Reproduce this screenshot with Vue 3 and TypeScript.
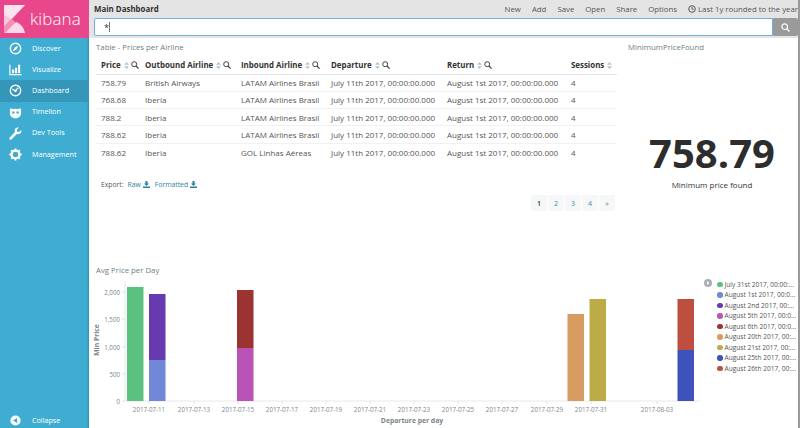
<script setup lang="ts">
interface Row { price: string; outbound: string; inbound: string }
const navItems = [
  { label: 'Discover', icon: 'compass' },
  { label: 'Visualize', icon: 'chart' },
  { label: 'Dashboard', icon: 'gauge', active: true },
  { label: 'Timelion', icon: 'mask' },
  { label: 'Dev Tools', icon: 'wrench' },
  { label: 'Management', icon: 'gear' },
]
const menu = ['New', 'Add', 'Save', 'Open', 'Share', 'Options']
const columns = [
  { label: 'Price', filter: true },
  { label: 'Outbound Airline', filter: true },
  { label: 'Inbound Airline', filter: true },
  { label: 'Departure', filter: true },
  { label: 'Return', filter: true },
  { label: 'Sessions', filter: false },
]
const rows: Row[] = [
  { price: '758.79', outbound: 'British Airways', inbound: 'LATAM Airlines Brasil' },
  { price: '768.68', outbound: 'Iberia', inbound: 'LATAM Airlines Brasil' },
  { price: '788.2', outbound: 'Iberia', inbound: 'LATAM Airlines Brasil' },
  { price: '788.62', outbound: 'Iberia', inbound: 'LATAM Airlines Brasil' },
  { price: '788.62', outbound: 'Iberia', inbound: 'GOL Linhas Aéreas' },
]
const pages = ['1', '2', '3', '4', '»']
const bars = [
  { x: 127, y: 287, h: 114, c: '#5ac17f' },
  { x: 149, y: 294, h: 66, c: '#673ab0' },
  { x: 149, y: 360, h: 41, c: '#7088d5' },
  { x: 237, y: 290, h: 58, c: '#9c3333' },
  { x: 237, y: 348, h: 53, c: '#b953b8' },
  { x: 567.5, y: 314, h: 87, c: '#d89c62' },
  { x: 589.5, y: 299, h: 102, c: '#bcab46' },
  { x: 677.5, y: 299, h: 51, c: '#bc4f40' },
  { x: 677.5, y: 350, h: 51, c: '#3f51bb' },
]
const yTicks = [
  { y: 292, t: '2,000' },
  { y: 319, t: '1,500' },
  { y: 347, t: '1,000' },
  { y: 374, t: '500' },
  { y: 401, t: '0' },
]
const xTicks = [
  { x: 149, t: '2017-07-11' },
  { x: 194, t: '2017-07-13' },
  { x: 238, t: '2017-07-15' },
  { x: 282, t: '2017-07-17' },
  { x: 326, t: '2017-07-19' },
  { x: 370, t: '2017-07-21' },
  { x: 414, t: '2017-07-23' },
  { x: 458, t: '2017-07-25' },
  { x: 502, t: '2017-07-27' },
  { x: 547, t: '2017-07-29' },
  { x: 591, t: '2017-07-31' },
  { x: 657, t: '2017-08-03' },
]
const legend = [
  { t: 'July 31st 2017, 00:00:...', c: '#5ac17f' },
  { t: 'August 1st 2017, 00:0...', c: '#7088d5' },
  { t: 'August 2nd 2017, 00:...', c: '#673ab0' },
  { t: 'August 5th 2017, 00:0...', c: '#b953b8' },
  { t: 'August 6th 2017, 00:0...', c: '#9c3333' },
  { t: 'August 20th 2017, 00:...', c: '#d89c62' },
  { t: 'August 21st 2017, 00:...', c: '#bcab46' },
  { t: 'August 25th 2017, 00:...', c: '#3f51bb' },
  { t: 'August 26th 2017, 00:...', c: '#bc4f40' },
]
</script>

<template>
  <div class="app">
    <aside class="sidebar">
      <div class="brand">
        <svg class="logo" width="21" height="28" viewBox="0 0 21 28">
          <path d="M0 0H21L0 22Z" fill="#f9c6dc" />
          <path d="M0 22L8 14 21 28H0Z" fill="#f38fbb" />
          <path d="M1 28L12 17C17 19 20 23 21 28Z" fill="#fbd9e8" />
          <path d="M0 0H21L8 14 0 10Z" fill="#fff" opacity=".5" />
        </svg>
        <span class="brand-name">kibana</span>
      </div>
      <nav class="nav">
        <a v-for="item in navItems" :key="item.label" class="nav-item" :class="{ active: item.active }">
          <svg class="nav-icon" width="13" height="13" viewBox="0 0 14 14">
            <template v-if="item.icon === 'compass'">
              <circle cx="7" cy="7" r="5.6" fill="none" stroke="#fff" stroke-width="1.5" />
              <path d="M10 4 8 8 4 10 6 6Z" fill="#fff" />
            </template>
            <template v-else-if="item.icon === 'chart'">
              <path d="M1 2V12.5H13.5" fill="none" stroke="#fff" stroke-width="1.3" />
              <path d="M3.3 7H5.5V11H3.3ZM6.5 5H8.7V11H6.5ZM9.8 2H12V11H9.8Z" fill="#fff" />
            </template>
            <template v-else-if="item.icon === 'gauge'">
              <circle cx="7" cy="7" r="5.6" fill="none" stroke="#fff" stroke-width="1.5" />
              <path d="M3.5 5.5 7 7.2 10 4" fill="none" stroke="#fff" stroke-width="1.3" />
              <circle cx="7" cy="7.5" r="1.3" fill="#fff" />
            </template>
            <template v-else-if="item.icon === 'mask'">
              <path d="M1 2.5C3 3.5 5 3.5 7 3 9 3.5 11 3.5 13 2.5V8C13 11 10 13 7 13.5 4 13 1 11 1 8Z" fill="#fff" />
              <circle cx="4.7" cy="7" r="1.3" fill="#3fadd1" />
              <circle cx="9.3" cy="7" r="1.3" fill="#3fadd1" />
            </template>
            <template v-else-if="item.icon === 'wrench'">
              <path d="M13.2 3.2 10.8 5.4 8.8 5 8.4 3 10.6.8C8.6 0 6.6 1.2 6.2 3 6 4 6.2 4.8 6.5 5.5L.8 11.2C0 12 .4 13 1 13.4 1.6 13.8 2.4 13.6 2.8 13.2L8.5 7.5C9.4 7.9 10.4 7.9 11.4 7.4 13 6.6 13.8 4.8 13.2 3.2Z" fill="#fff" />
            </template>
            <template v-else>
              <circle cx="7" cy="7" r="4.2" fill="none" stroke="#fff" stroke-width="2.6" />
              <path d="M6 .5H8V3H6ZM6 11H8V13.5H6ZM.5 6H3V8H.5ZM11 6H13.5V8H11ZM1.7 3.1 3.1 1.7 4.8 3.4 3.4 4.8ZM9.2 10.6 10.6 9.2 12.3 10.9 10.9 12.3ZM1.7 10.9 3.4 9.2 4.8 10.6 3.1 12.3ZM9.2 3.4 10.9 1.7 12.3 3.1 10.6 4.8Z" fill="#fff" />
            </template>
          </svg>
          <span class="nav-label">{{ item.label }}</span>
        </a>
      </nav>
      <a class="nav-item collapse">
        <svg class="nav-icon" width="13" height="13" viewBox="0 0 14 14">
          <circle cx="7" cy="7" r="5.5" fill="#fff" />
          <path d="M8.8 4V10L4.4 7Z" fill="#3fadd1" />
        </svg>
        <span class="nav-label">Collapse</span>
      </a>
    </aside>

    <main class="main">
      <header class="topbar">
        <div class="topline">
          <strong class="title">Main Dashboard</strong>
          <div class="menu">
            <span v-for="m in menu" :key="m">{{ m }}</span>
            <span class="time">
              <svg width="8" height="8" viewBox="0 0 8 8">
                <circle cx="4" cy="4" r="3.3" fill="none" stroke="#444" stroke-width=".9" />
                <path d="M4 2V4.2H5.6" fill="none" stroke="#444" stroke-width=".8" />
              </svg>
              Last 1y rounded to the year
            </span>
          </div>
        </div>
        <div class="query">
          <div class="query-input"><span class="star">*</span><i class="caret"></i></div>
          <button class="query-btn" type="button">
            <svg width="9" height="9" viewBox="0 0 9 9">
              <circle cx="3.7" cy="3.7" r="2.8" fill="none" stroke="#fff" stroke-width="1.2" />
              <path d="M5.8 5.8 8.4 8.4" stroke="#fff" stroke-width="1.4" />
            </svg>
          </button>
        </div>
      </header>

      <section class="upper">
        <div class="table-panel">
          <h3 class="panel-title">Table - Prices per Airline</h3>
          <table class="table">
            <thead>
              <tr>
                <th v-for="col in columns" :key="col.label">
                  <span class="th-in">
                    {{ col.label }}
                    <svg width="5" height="7" viewBox="0 0 5 7" class="sort"><path d="M2.5 0 5 2.8H0ZM2.5 7 0 4.2H5Z" fill="#b9c4c8" /></svg>
                    <svg v-if="col.filter" width="8" height="8" viewBox="0 0 8 8" class="zoom">
                      <circle cx="3.2" cy="3.2" r="2.5" fill="none" stroke="#444" stroke-width="1" />
                      <path d="M5 5 7.6 7.6" stroke="#444" stroke-width="1.2" />
                    </svg>
                  </span>
                </th>
              </tr>
            </thead>
            <tbody>
              <tr v-for="(r, i) in rows" :key="i">
                <td>{{ r.price }}</td>
                <td>{{ r.outbound }}</td>
                <td>{{ r.inbound }}</td>
                <td>July 11th 2017, 00:00:00.000</td>
                <td>August 1st 2017, 00:00:00.000</td>
                <td>4</td>
              </tr>
            </tbody>
          </table>
          <div class="export">
            <span>Export:</span>
            <a>Raw <svg width="7" height="7" viewBox="0 0 7 7"><path d="M2.5 0H4.5V2.5H6L3.5 5 1 2.5H2.5ZM0 5.5H7V7H0Z" fill="#2f7f9f" /></svg></a>
            <a>Formatted <svg width="7" height="7" viewBox="0 0 7 7"><path d="M2.5 0H4.5V2.5H6L3.5 5 1 2.5H2.5ZM0 5.5H7V7H0Z" fill="#2f7f9f" /></svg></a>
          </div>
          <div class="pager">
            <span v-for="(p, i) in pages" :key="p" class="page" :class="{ current: i === 0 }">{{ p }}</span>
          </div>
        </div>
        <div class="metric-panel">
          <h3 class="panel-title">MinimumPriceFound</h3>
          <div class="metric">
            <div class="metric-value">758.79</div>
            <div class="metric-label">Minimum price found</div>
          </div>
        </div>
      </section>

      <section class="lower">
        <div class="chart-wrap">
          <h3 class="panel-title chart-title">Avg Price per Day</h3>
          <svg class="chart" width="617" height="163" viewBox="89 265 617 163">
            <path d="M125 281V401H700" fill="none" stroke="#e6e9ea" stroke-width="1" />
            <g v-for="t in yTicks" :key="t.t">
              <path :d="`M122 ${t.y}H125`" stroke="#dfe3e4" />
              <text class="tick" x="120" :y="t.y + 3" text-anchor="end">{{ t.t }}</text>
            </g>
            <g v-for="t in xTicks" :key="t.t">
              <path :d="`M${t.x} 401V404`" stroke="#dfe3e4" />
              <text class="tick" :x="t.x" y="412" text-anchor="middle">{{ t.t }}</text>
            </g>
            <rect v-for="(b, i) in bars" :key="i" :x="b.x" :y="b.y" width="16.5" :height="b.h" :fill="b.c" />
            <text class="axis-title" transform="translate(99 340) rotate(-90)" text-anchor="middle">Min Price</text>
            <text class="axis-title" x="412" y="422.5" text-anchor="middle">Departure per day</text>
          </svg>
        </div>
        <div class="legend">
          <div class="legend-toggle">
            <svg width="8" height="8" viewBox="0 0 8 8">
              <circle cx="4" cy="4" r="4" fill="#a9b0b3" />
              <path d="M3 2 5.4 4 3 6Z" fill="#fff" />
            </svg>
          </div>
          <ul class="legend-list">
            <li v-for="l in legend" :key="l.t">
              <i class="dot" :style="{ background: l.c }"></i>
              <span>{{ l.t }}</span>
            </li>
          </ul>
        </div>
      </section>
    </main>
  </div>
</template>

<style>
html, body { margin: 0; padding: 0; background: #fff; overflow: hidden; }
</style>

<style scoped>
.app {
  display: flex;
  width: 800px;
  height: 428px;
  overflow: hidden;
  font-family: "Open Sans", "Noto Sans", sans-serif;
  color: #3f3f3f;
  font-size: 8.5px;
}
.sidebar {
  width: 89px;
  flex: none;
  display: flex;
  flex-direction: column;
  background: #3fadd1;
  box-shadow: inset -2px 0 2px -1px #2f8fb0;
}
.brand {
  height: 38px;
  flex: none;
  display: flex;
  align-items: center;
  gap: 5px;
  padding-left: 4px;
  background: #e8488b;
  box-sizing: border-box;
}
.logo { flex: none; }
.brand-name {
  color: #fff;
  font-size: 17px;
  font-weight: 300;
  letter-spacing: .1px;
  margin-top: -1px;
}
.nav { flex: 1; display: flex; flex-direction: column; }
.nav-item {
  height: 21.2px;
  display: flex;
  align-items: center;
  padding-left: 9px;
  gap: 10px;
  color: #fff;
  font-size: 7.2px;
  font-weight: 400;
  flex: none;
}
.nav-label { margin-bottom: 2px; }
.nav-item.active { background: #3497ba; }
.nav-icon { flex: none; }
.collapse { height: 15px; margin-bottom: 0; }

.main {
  flex: 1;
  min-width: 0;
  display: flex;
  flex-direction: column;
  border-right: 2px solid #9a9a9a;
}
.topbar {
  height: 38px;
  flex: none;
  background: #e4e4e4;
  padding: 1px 0 0 5px;
  box-sizing: border-box;
}
.topline {
  height: 16px;
  display: flex;
  align-items: center;
  justify-content: space-between;
}
.title { font-size: 7.9px; font-weight: 700; color: #333; }
.menu { display: flex; gap: 11px; font-size: 7.8px; color: #555; white-space: nowrap; }
.time { display: flex; align-items: center; gap: 2px; }
.query { display: flex; height: 18px; margin-top: 1px; }
.query-input {
  flex: 1;
  background: #fff;
  border: 1px solid #6eb0e4;
  box-sizing: border-box;
  display: flex;
  align-items: center;
  padding-left: 9px;
  color: #333;
  font-size: 9px;
  border-radius: 2px 0 0 2px;
}
.caret { width: 1px; height: 10px; background: #777; margin-left: 0; }
.query-btn {
  width: 25px;
  border: 0;
  padding: 0;
  background: #9a9a9a;
  display: flex;
  align-items: center;
  justify-content: center;
  border-radius: 0 2px 2px 0;
}

.upper { height: 227px; flex: none; display: flex; }
.table-panel { width: 528px; flex: none; padding: 4px 0 0 7px; box-sizing: border-box; }
.panel-title {
  margin: 0;
  font-size: 7.8px;
  line-height: 11px;
  font-weight: 400;
  color: #6d7f85;
}
.table { width: 521px; border-collapse: collapse; table-layout: fixed; margin-top: 3px; }
.table th, .table td {
  box-sizing: border-box;
  text-align: left;
  padding: 0 0 0 5px;
  white-space: nowrap;
  overflow: hidden;
}
.table th:nth-child(1), .table td:nth-child(1) { width: 44px; }
.table th:nth-child(2), .table td:nth-child(2) { width: 96px; }
.table th:nth-child(3), .table td:nth-child(3) { width: 90px; }
.table th:nth-child(4), .table td:nth-child(4) { width: 116px; }
.table th:nth-child(5), .table td:nth-child(5) { width: 124px; }
.table th { height: 18px; padding-top: 1px; font-size: 7.9px; font-weight: 700; color: #333; border-bottom: 1px solid #e3e6e7; }
.table td { height: 17.3px; font-size: 8px; color: #555; border-bottom: 1px solid #f0f2f2; }
.table tbody tr:last-child td { border-bottom: 0; }
.th-in { display: inline-flex; align-items: center; gap: 2px; }
.sort { margin-left: 1px; }
.export {
  display: flex;
  gap: 4px;
  margin-top: 20px;
  padding-left: 5px;
  font-size: 6.8px;
  color: #555;
}
.export a { color: #2f7f9f; display: inline-flex; align-items: center; gap: 2px; }
.export a + a { margin-left: 1px; }
.pager { display: flex; justify-content: flex-end; gap: 1px; margin-top: 6px; width: 521px; padding-right: 2px; box-sizing: border-box; }
.page {
  width: 16px;
  height: 16px;
  display: flex;
  align-items: center;
  justify-content: center;
  background: #f6f7f7;
  color: #3b8bab;
  font-size: 7px;
  border-radius: 2px;
}
.page.current { color: #333; font-weight: 600; }

.metric-panel { flex: 1; min-width: 0; padding: 4px 0 0 11px; display: flex; flex-direction: column; box-sizing: border-box; }
.metric { margin-top: 73px; text-align: center; width: 168px; }
.metric-value { font-size: 40px; line-height: 54px; font-weight: 700; color: #2d2d2d; }
.metric-label { font-size: 8px; line-height: 10px; color: #333; }

.lower { flex: 1; display: flex; min-height: 0; }
.chart-wrap { width: 617px; flex: none; position: relative; }
.chart-title { padding-left: 7px; position: relative; z-index: 1; }
.chart { position: absolute; left: 0; top: 0; display: block; }
.tick { font-size: 6.2px; fill: #7c8488; font-family: "Open Sans", sans-serif; }
.axis-title { font-size: 6.8px; font-weight: 700; fill: #7c8488; font-family: "Open Sans", sans-serif; }
.legend { flex: 1; min-width: 0; display: flex; padding-top: 14px; margin-left: -2px; overflow: hidden; }
.legend-toggle { width: 13px; flex: none; margin-top: -1px; }
.legend-list { list-style: none; margin: 0; padding: 0; }
.legend-list li {
  height: 10.5px;
  display: flex;
  align-items: center;
  gap: 2px;
  font-size: 6.6px;
  color: #555;
  white-space: nowrap;
}
.dot { width: 5.5px; height: 5.5px; border-radius: 50%; flex: none; }
</style>
